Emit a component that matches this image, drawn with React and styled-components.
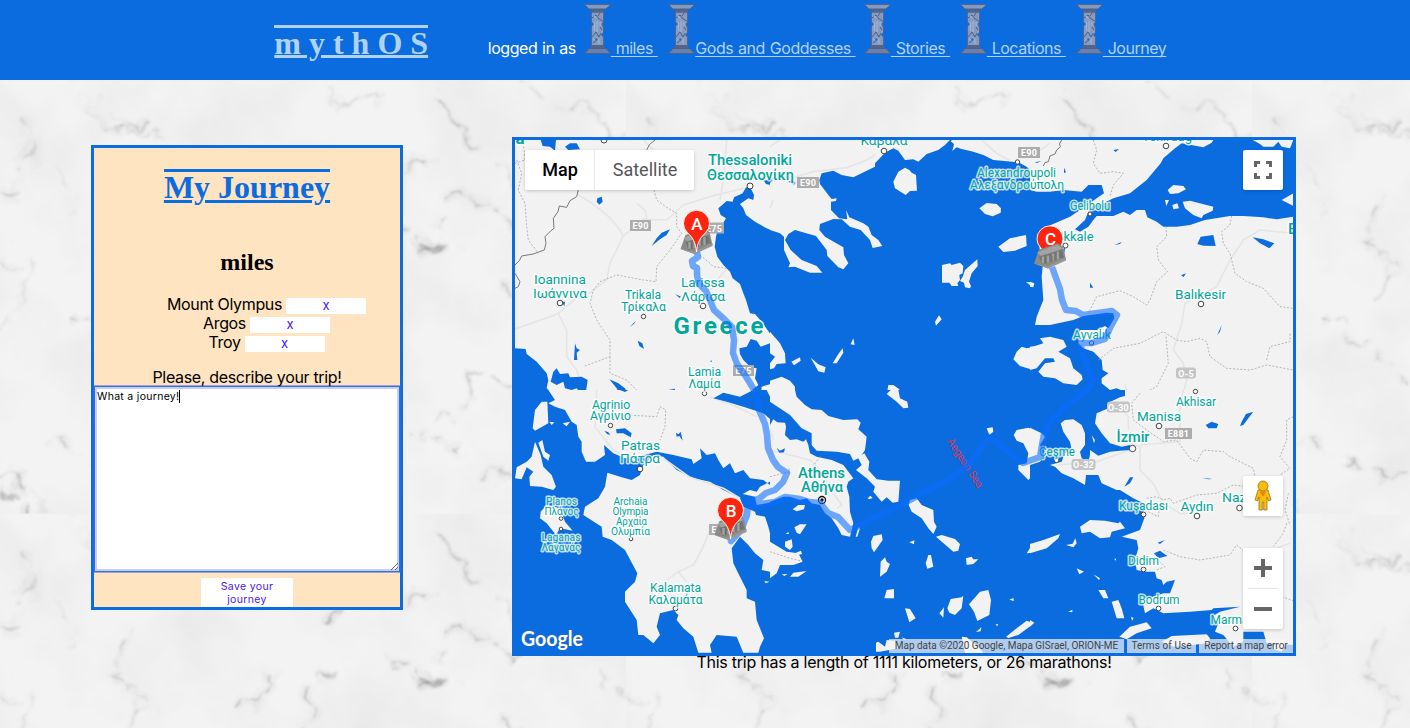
import React from "react";
import styled, { createGlobalStyle } from "styled-components";

const SEA = "#0a6cdf";
const LAND = "#f2f2f2";
const TEAL = "#00a79a";

const GlobalStyle = createGlobalStyle`
  * { box-sizing: border-box; }
  body {
    margin: 0;
    background: #f1f1f1;
    font-family: Inter, "Liberation Sans", sans-serif;
    font-size: 16px;
    color: #000;
  }
`;

const Page = styled.div`
  position: relative;
  width: 1410px;
  height: 728px;
  overflow: hidden;
`;

const Backdrop = styled.svg`
  position: absolute;
  inset: 0;
  z-index: -1;
`;

const Header = styled.header`
  display: flex;
  align-items: baseline;
  height: 80px;
  padding-left: 274.3px;
  background: ${SEA};
`;

const Brand = styled.h1`
  width: 154px;
  margin: 0 59.5px 0 0;
  background: linear-gradient(#b0d2f7, #b0d2f7) 0 0 / 100% 3px no-repeat;
  font: bold 32px "Liberation Serif", serif;
  white-space: nowrap;
  color: #b0d2f7;
  text-decoration: underline;
  text-decoration-thickness: 3px;
  text-underline-offset: 1px;
`;

const Nav = styled.nav`
  display: flex;
  align-items: baseline;
  padding-top: 4px;
  white-space: pre;
  letter-spacing: -0.46px;
  word-spacing: 0.8px;
`;

const LoggedIn = styled.span`
  width: 96px;
  color: #fff;
`;

const NavLink = styled.a`
  display: flex;
  align-items: baseline;
  width: ${(p) => p.$w}px;
  color: #b0d2f7;
  svg { display: block; flex: none; }
  span {
    text-decoration: underline;
    text-decoration-thickness: 1px;
    text-underline-offset: 2px;
    text-decoration-skip-ink: none;
  }
`;

const Main = styled.main`
  display: flex;
  align-items: flex-start;
  padding: 57px 0 0 91px;
`;

const Panel = styled.section`
  display: flex;
  flex-direction: column;
  align-items: center;
  width: 312px;
  height: 465px;
  margin: 8px 109px 0 0;
  border: 3px solid ${SEA};
  background: #ffe4c1;
`;

const Title = styled.h2`
  margin: 21px 0 0;
  background: linear-gradient(${SEA}, ${SEA}) 0 0 / 100% 3px no-repeat;
  font: bold 32px/37px "Liberation Serif", serif;
  color: ${SEA};
  text-decoration: underline;
  text-decoration-thickness: 3px;
  text-underline-offset: 2px;
`;

const Traveller = styled.h3`
  margin: 43px 0 0;
  font: bold 24px/27px "Liberation Serif", serif;
`;

const Stops = styled.ul`
  width: 100%;
  margin: 18px 0 0;
  padding: 0 1px 0 40px;
  list-style: none;
`;

const Stop = styled.li`
  display: flex;
  justify-content: center;
  align-items: center;
  gap: 4px;
  height: 19px;
  letter-spacing: -0.34px;
`;

const Remove = styled.button`
  flex: none;
  width: 80px;
  height: 16px;
  margin-top: 5px;
  padding: 0 0 2px;
  border: 0;
  background: #fff;
  color: #4a17e8;
  font: 13px/14px Inter, sans-serif;
`;

const Prompt = styled.label`
  position: relative;
  z-index: 2;
  margin-top: 17px;
  height: 18px;
  line-height: 18px;
  letter-spacing: -0.33px;
`;

const Notes = styled.div`
  position: relative;
  z-index: 1;
  display: flex;
  align-items: flex-start;
  width: 306px;
  height: 187px;
  padding: 3px 2px;
  border: 1px solid #3f68e0;
  box-shadow: 0 0 0 1px rgba(63, 104, 224, 0.5), inset 0 0 0 2px #c3d0f7;
  background: #fff;
  font: 10.5px/13px Inter, sans-serif;
  letter-spacing: 0.3px;
`;

const Caret = styled.i`
  width: 1px;
  height: 13px;
  background: #000;
`;

const Grip = styled.svg`
  position: absolute;
  right: 1px;
  bottom: 1px;
`;

const Save = styled.button`
  width: 92px;
  height: 29px;
  margin-top: 6px;
  padding: 0 16px;
  border: 0;
  background: #fff;
  color: #4a17e8;
  font: 10.5px/13px Inter, sans-serif;
  letter-spacing: 0.35px;
`;

const MapColumn = styled.section`
  width: 784px;
`;

const MapFrame = styled.div`
  position: relative;
  height: 519px;
  border: 3px solid ${SEA};
  overflow: hidden;
  font-family: Roboto, sans-serif;
`;

const MapArt = styled.svg`
  display: block;
`;

const Control = styled.div`
  position: absolute;
  top: ${(p) => p.$top}px;
  right: 10px;
  display: flex;
  flex-direction: column;
  align-items: center;
  justify-content: center;
  width: 40px;
  height: ${(p) => p.$h || 40}px;
  border-radius: 2px;
  background: #fff;
  box-shadow: 0 1px 4px -1px rgba(0, 0, 0, 0.3);
`;

const TypeSwitch = styled.div`
  position: absolute;
  top: 10px;
  left: 10px;
  display: flex;
  height: 40px;
  border-radius: 2px;
  background: #fff;
  box-shadow: 0 1px 4px -1px rgba(0, 0, 0, 0.3);
`;

const TypeButton = styled.button`
  width: ${(p) => p.$w}px;
  padding: 0 0 1px 1px;
  border: 0;
  border-left: ${(p) => (p.$active ? "0" : "1px solid #e8e8e8")};
  background: transparent;
  color: ${(p) => (p.$active ? "#000" : "#565656")};
  font: ${(p) => (p.$active ? 500 : 400)} 18px Roboto, sans-serif;
`;

const Credits = styled.div`
  position: absolute;
  right: 0;
  bottom: 0;
  display: flex;
  gap: 3px;
`;

const Credit = styled.span`
  width: ${(p) => p.$w}px;
  height: 14px;
  background: rgba(245, 245, 245, 0.7);
  color: #444;
  font-size: 10px;
  line-height: 14px;
  text-align: center;
  white-space: nowrap;
  letter-spacing: ${(p) => p.$ls || 0}px;
`;

const Summary = styled.p`
  margin: 0;
  line-height: 13px;
  text-align: center;
  letter-spacing: -0.25px;
`;

const VEINS = [
  ["M70 0Q90 10 100 30T130 55", 1, 0.2], ["M25 40L30 60 26 85 20 92M0 115L30 108", 3, 0.3],
  ["M0 395Q15 400 25 412L38 434", 4, 0.5], ["M0 412L14 425", 8, 0.4], ["M0 250L25 220 30 180 15 160", 1, 0.2],
  ["M403 95L420 82 438 78 M403 165L420 168 445 160 462 172", 2, 0.45], ["M407 351L430 353 445 365 462 366", 2, 0.5],
  ["M433 12L445 30 470 60 500 90 520 102 560 112", 1.4, 0.42], ["M520 310L490 300 466 285 465 325 430 360", 1.5, 0.45],
  ["M327 107L345 88 370 82 390 95M393 161L398 145 425 170 450 160", 2, 0.45],
  ["M305 214L315 190 308 175 330 160M240 194L255 180 272 170 273 152", 2.2, 0.42],
  ["M440 115L470 120 520 145M435 150L440 135", 2, 0.35], ["M330 15L350 25 380 20", 1.3, 0.3],
  ["M80 10L120 40 165 60 M55 90L75 130", 1, 0.22], ["M520 0L545 20 590 30 626 60", 1.3, 0.35],
  ["M560 250L590 280 626 300M500 200L540 230 560 250", 1.3, 0.35], ["M70 230L95 260 140 280 158 310", 1.3, 0.35],
  ["M50 360L90 375 120 395 160 390", 1.5, 0.4], ["M130 120L110 160 150 190 120 220", 1.4, 0.35],
  ["M180 330L230 350 300 330 350 390", 1.3, 0.3], ["M90 30L110 50 150 40M480 400L530 390 570 420", 1.4, 0.35],
  ["M590 130L600 170 626 180M0 180L20 190", 1.3, 0.3], ["M200 240L260 260 300 300", 1, 0.22],
];

const Marble = () => (
  <Backdrop width="1410" height="728">
    <defs>
      <filter id="vein" x="0" y="0" width="626" height="434" filterUnits="userSpaceOnUse">
        <feTurbulence type="fractalNoise" baseFrequency="0.04" numOctaves="3" seed="7" result="n" />
        <feDisplacementMap in="SourceGraphic" in2="n" scale="30" xChannelSelector="R" yChannelSelector="G" result="bent" />
        <feTurbulence type="fractalNoise" baseFrequency="0.05" numOctaves="4" seed="31" />
        <feColorMatrix values="0 0 0 0 0  0 0 0 0 0  0 0 0 0 0  3.5 0 0 0 -1.25" result="patches" />
        <feComposite in="bent" in2="patches" operator="in" />
        <feGaussianBlur stdDeviation="0.8" />
      </filter>
      <filter id="cloud" x="0" y="0" width="626" height="434" filterUnits="userSpaceOnUse">
        <feTurbulence type="fractalNoise" baseFrequency="0.012" numOctaves="5" seed="12" />
        <feColorMatrix values="0 0 0 0 .62  0 0 0 0 .62  0 0 0 0 .62  .5 0 0 0 -.2" />
      </filter>
      <pattern id="tile" width="626" height="434" y="80" patternUnits="userSpaceOnUse">
        <rect width="626" height="434" fill="#f3f3f3" />
        <rect width="626" height="434" filter="url(#cloud)" />
        <g filter="url(#vein)" fill="none" stroke="#777">
          {VEINS.map(([d, w, o]) => (
            <g key={d}>
              <path d={d} strokeWidth={w * 6} opacity={o * 0.2} />
              <path d={d} strokeWidth={w} opacity={o} />
            </g>
          ))}
        </g>
      </pattern>
    </defs>
    <rect y="80" width="1410" height="648" fill="url(#tile)" />
  </Backdrop>
);

const Column = () => (
  <svg width="27" height="50" viewBox="0 0 27 50">
    <path d="M7.5 8H19.5V18L18 20 19.5 24V29L17.5 31 19.5 33V42H7.5V22L9.5 20 7.5 18Z" fill="#869bc2" stroke="#566789" />
    <path d="M.5.5H26.5L22 5H5Z" fill="#8299c0" stroke="#50648c" />
    <path d="M7 5.2H20V8.5H7ZM7 41H20V44.5H7Z" fill="#53648a" />
    <path d="M5 44.5H22L26.5 49.5H.5Z" fill="#6980ac" stroke="#4c6190" />
    <path d="M8 14L12 11 15 15 19 17M16 9L14 12M8 33L12 28 15 33 17 29M9 39L13 36M16 23L18 26" fill="none" stroke="#4a5976" strokeWidth=".9" />
    <path d="M10.5 18V27M13 17V28M16 18V22M10 12L12 14M15 35V40M10 35V36" stroke="#a3b4d2" strokeWidth="1.2" />
    <path d="M6.5 18.5L9.5 20.5 6.5 22.5ZM20.5 27L17.5 31 20.5 32ZM12 34L14 36H11Z" fill={SEA} />
  </svg>
);

/* Each sheet is a 270px wide piece of the chart drawn at three times its size. */
const SHEETS = [
  {
    x: 510, y: 130, h: 810, base: LAND,
    roads: "M15 597C60 580 100 570 145 550 180 520 210 490 240 488L290 450 300 400 340 318C310 260 250 220 205 195M340 318L400 268 470 270 520 225 600 200 700 175M145 550L170 600 170 680 200 720 230 810M380 220L405 240 410 265M600 530L670 600 670 690 740 790M780 130L810 105M650 30L640 150 630 210M650 415L600 480M400 30L430 60",
    sea: "M810 312L770 295 735 275 708 255 700 235 690 222 715 205 730 210 732 195 722 175 708 172 698 190 672 202 668 215 650 213 625 235 632 255 648 265 640 278 625 290 618 320 614 350 622 380 640 405 660 425 668 445 690 462 700 490 708 510 720 550 735 552 755 575 790 625 810 642ZM762 152L780 148 792 158 782 165 768 162ZM688 655L710 650 722 627 740 632 752 650 780 640 795 660 798 690 780 710 810 708V765L790 760 755 770 752 800 758 810H610L620 790 650 788 680 798 720 785 745 765 735 745 740 715 722 712 700 690 690 672ZM15 655L47 657 50 672 80 695 110 730 115 750 110 775 125 790 128 810H15ZM140 715L130 725 122 755 140 765 160 755 165 775 185 780 200 775 215 795 228 785 233 750 215 740 180 742 175 730 150 732ZM92 30H138L135 62 120 50 98 48ZM165 50L180 40 200 40 210 58 175 60ZM262 205L275 200 278 215 268 224 260 215ZM425 348L440 325 455 308 480 298 470 315 450 328ZM383 632L397 640 402 657 388 648ZM192 690L195 640 200 655 210 660 200 668 202 690ZM298 748L325 760 345 775 355 795 330 795 320 775ZM155 515h10l-2 14ZM360 590L378 572 372 582ZM475 778l20-2v4ZM495 492l18 8-4 4ZM600 694l5-3v5Z",
    lines: "M205 180L200 200 180 212 170 232 148 228 144 245 130 265 132 295 122 303 105 320 108 340 103 360 70 372 35 378 28 392 15 405M15 430L30 455 25 470 15 475M410 60L418 44 435 30",
    dashes: "M20 90L35 130 25 180 45 220 50 290 55 330 85 370M15 100L45 90 40 40M432 180L440 210 470 232 500 250 500 290 515 310 480 360 460 385 440 410 438 455 400 450 320 435 270 455 250 480 240 520 260 570 300 630 300 680 220 710M570 375L600 400 610 410 650 415M300 680L300 730 350 750 390 790",
  },
  {
    x: 770, y: 130, h: 810, base: SEA,
    land: "M0 30H540L525 45 505 60 470 72 445 95 430 88 405 90 385 62 370 55 345 68 315 100 315 110 290 122 250 142 215 135 190 122 155 130 148 150 150 162 175 195 185 207 200 205 198 213 183 215 183 240 207 265 232 268 228 240 238 262 280 280 295 290 305 315 325 330 337 348 308 354 300 330 272 300 240 290 215 268 190 267 150 282 148 300 165 320 220 352 222 375 235 400 220 418 205 412 172 378 170 360 138 318 75 300 55 312 45 330 62 360 95 390 140 408 157 428 120 428 75 410 55 412 60 400 42 360 42 320 30 310 0 300ZM545 30L540 40 548 62 560 52 572 56 610 65 640 75 670 90 745 97 770 110 785 125 800 180 810 185V30ZM370 155L385 125 405 113 418 120 425 128 438 135 441 182 420 183 407 195 375 175ZM628 235L650 219 680 222 693 235 692 248 668 259 645 252ZM685 350L720 325 768 315 770 348 735 362 700 366ZM516 405L540 400 545 405 570 398 580 408 578 430 568 435 570 450 562 460 565 468 545 468 538 458 516 458ZM578 440L585 420 622 388 623 408 605 430 597 455 603 468 600 475 585 472 582 458 570 453ZM768 457L795 455 792 473ZM495 575L507 556 515 568 498 587ZM250 625l-8 18 12 2ZM188 700L205 672 218 655 220 668 200 700ZM64 695L90 682 92 692 72 706ZM122 683L145 703 167 712 163 728 145 724ZM810 647L770 655 755 650 740 665 730 688 750 708 790 720 810 715ZM810 545L795 580 810 592ZM0 605L30 640 45 670 47 700 20 702 12 715 0 718V700L15 680 0 670ZM0 752L35 740 60 752 75 770V810H0ZM355 765L370 765 388 778 385 795 402 810 370 810 350 795Z",
    sea: "M55 155l10-5 12 8-5 6ZM540 32L552 42 548 60 536 45ZM0 158l8-8-8-3Z",
    roads: "M0 155L80 140 130 125 235 112 290 90 315 75M0 50L30 30M635 30L680 70 720 92M0 235L10 210",
  },
  {
    x: 1030, y: 130, h: 810, base: LAND,
    roads: "M790 310L750 306 690 300 640 330 600 390 560 470 465 520 455 580 430 660 460 700 470 750 455 810M0 80L60 40M285 760L295 810",
    sea: "M0 180L20 185 60 185 100 180 155 185 175 165 215 165 222 190 200 205 150 240 120 260 50 290 22 315 28 350 38 410 35 440 40 510 20 560 15 585 60 585 130 570 160 558 230 548 250 550 253 565 235 595 225 588 200 600 150 600 145 640 160 655 190 665 215 690 218 720 235 730 215 745 215 760 240 780 260 775 285 785 280 810H0ZM135 298L165 270 175 245 190 225 220 220 250 205 300 190 350 150 375 120 392 100 400 85 435 55 455 40 500 48 520 52 545 38 550 30H790V260L740 268 700 262 640 258 600 258 525 270 480 285 440 290 400 290 380 275 352 262 345 240 320 240 300 255 280 245 250 258 200 258 190 270 175 290 150 305ZM95 365L106 350 102 375 85 395ZM502 342L512 320 550 315 557 348 520 347ZM668 322L700 328 733 340 718 355 690 340ZM453 436l15-6-7 11ZM180 458l10 15h-10ZM253 345l22-9-5 6ZM250 60l17-3-10 9ZM102 113l6 14-6 2ZM562 615L575 585 570 605ZM15 97l20-4-15 6Z",
    land: "M413 180L430 165 460 168 468 178 445 190 420 192ZM405 210h12l-8 18ZM427 225l15-5 5 15-17 3ZM458 215L480 212 550 230 548 242 520 255 515 265 490 255 465 235ZM668 30H790L780 55 755 50 745 35 730 50 700 50 690 42ZM755 210L790 190V228ZM0 650L15 648 40 640 30 625 60 620 100 630 110 650 85 665 120 685 130 715 155 735 158 748 140 765 100 760 75 745 40 740 25 725 45 700 75 695 70 685 45 685 20 715 0 720ZM0 455L13 460 10 472 0 470Z",
    lines: "M95 30L88 42 92 50 80 60 75 72 60 78 55 95 45 98 40 108",
    dashes: "M190 30L200 60 190 100 210 130 250 125 280 130 250 165 240 200M605 258L600 285 575 305 580 340 600 370 615 430 650 455 700 475 750 530 790 535M408 290L410 320 380 350 385 390 412 425 380 455 360 510 350 525 310 500 270 482 200 500 175 550M205 690L250 655 330 640 400 605 440 630 470 635 510 625 530 635 540 680 590 715 660 720 710 705 790 720M408 620L415 700 380 770 310 805M710 690L720 650 780 635V610",
  },
  {
    x: 510, y: 390, h: 789, base: SEA,
    land: "M115 0L135 30 115 40 135 50 165 60 185 95 200 105 205 140 215 155 215 185 228 215 255 215 285 195 282 165 310 190 345 205 385 200 440 185 490 195 545 208 550 222 575 205 570 175 590 195 615 190 625 210 640 235 660 220 675 250 700 240 720 265 760 270 780 285 810 265V0ZM292 248L335 262 365 270 390 255 400 225 430 195 460 200 500 240 550 265 600 275 640 300 690 325 700 350 735 365 738 375 765 380 775 410 780 430 810 455V565L785 560 780 545 755 540 760 510 735 490 715 465 690 440 665 475 670 520 690 560 710 600 710 625 735 635 740 690 762 745 750 770 745 788H700L680 740 620 735 600 765 605 788H565L550 740 520 715 500 690 505 675 490 660 450 670 440 710 450 735 430 760 400 735 385 735 380 690 345 635 345 605 375 575 382 550 345 480 305 450 278 440 275 410 220 375 225 350 265 325 285 290ZM698 312L720 300 740 305 750 290 790 270 810 262V330L770 340 740 345 735 320ZM75 60L95 35 112 35 115 100 75 122 68 115ZM118 95l15 2-8 8ZM158 100l22-5-10 14ZM75 155L92 195 100 230 125 255 138 290 130 300 95 290 60 288 58 260 70 245 50 232 35 268 15 265 20 232 50 215 65 200ZM85 158L97 150 105 185 120 195 115 212 100 200ZM92 365L110 345 150 355 165 395 188 422 150 415 138 435 110 400 90 385ZM763 573l16 2-12 5Z",
    sea: "M610 25L640 8 690 20 730 0H770L780 20 810 30V95H790L760 70 700 50 650 35ZM283 122l12 5 6 8-10-3ZM318 118L345 115 365 130 362 142 340 130 320 130ZM498 128L505 133 512 125 518 152 508 138 500 140ZM330 0H355L345 6Z",
    roads: "M600 420L575 480 550 525 505 545 470 570M505 545L530 575M260 0L255 110 310 180 385 215M460 205L540 262 640 295 690 325M600 20L680 50 740 80",
    dashes: "M350 75L440 80 450 50 467 60 465 110 450 150M780 470L790 490 810 500",
  },
  {
    x: 770, y: 390, h: 789, base: SEA,
    land: "M0 35L60 75 95 115 125 130 125 165 140 182 200 185 240 192 250 212 265 205 275 225 258 240 290 265 315 290 310 305 335 335 350 322 368 338 385 335 390 272 355 272 320 268 295 240 298 215 283 190 275 195 285 180 290 140 265 118 272 98 262 88 220 90 175 78 155 60 125 58 105 45 80 20 75 0H0ZM0 105L10 88 22 97 45 98 48 110 45 135 60 150 80 148 100 155 108 148 115 165 120 190 140 200 185 210 220 225 250 265 235 275 230 290 238 320 240 365 250 400 240 440 215 435 205 415 185 385 165 370 150 345 125 340 110 325 90 330 60 320 40 320 0 335ZM68 358L85 345 105 345 102 358 80 364ZM73 412L90 403 110 403 90 433 80 428ZM47 432l8-6 2 6ZM45 455L65 448 68 470 60 480 45 470ZM78 488l15-6 3 10-12 3ZM0 455L25 470 50 485 85 490 98 515 70 525 30 525 20 550 0 565ZM35 553l18-1-10 6ZM60 560L70 548 110 543 85 560ZM257 440L265 412 270 415 262 440ZM303 455L310 438 335 433 338 450 312 487 305 475ZM418 457l15-6-1 12ZM467 520L475 495 483 495 490 530 472 536ZM330 560L332 515 345 502 350 515 360 522 350 545ZM343 625L350 600 372 597 372 625ZM405 655L420 657 437 685 418 697ZM420 330L440 325 455 345 490 360 492 395 500 410 490 432 475 415 455 385 425 365 416 345ZM498 440L515 435 555 447 570 462 565 482 550 485ZM588 505L605 500 610 508 625 508 610 522 590 525ZM597 643L630 605 655 600 663 630 658 675 622 693 612 665ZM532 655L542 627 575 622 580 617 575 655 555 675 538 668ZM508 670L522 652 520 683ZM718 628l13-3v9ZM676 703h9l-3 6ZM618 726L634 712 632 724ZM708 740L740 715 770 692 793 700 745 735 715 744ZM575 740L590 742 630 775 640 789 585 789ZM318 758L325 755 345 770 350 750 375 752 385 775 330 785 318 785ZM372 728l18-3-5 18h-10ZM293 325l8-8 7 7-10 4ZM395 742l15 6-8 2ZM650 115L668 112 670 125 658 135ZM731 135L740 120 775 113 810 130V235L775 270 745 240 745 225 770 220 775 190 760 160 740 152ZM770 490L790 458 810 450V487ZM350 12L362 0H385L390 25 412 35 415 53 400 55 380 35Z",
    sea: "M20 173L30 182 45 175 42 187 28 188Z",
    roads: "M0 180L60 195 120 210 150 240 190 310 215 345 200 355M0 120L10 150",
    dashes: "M0 260L60 245 55 230M120 240L150 200M0 485L60 505 90 512",
  },
  {
    x: 1030, y: 390, h: 789, base: LAND,
    roads: "M300 160L330 170 330 240 370 280 400 340 450 370 490 370M330 165L450 155 450 40 460 0M270 50L295 80V120M80 225L200 215 300 180M780 460L740 475",
    sea: "M0 0H285V18L270 22 235 38 235 55 200 70 195 100 215 130 240 160 275 170 300 165 302 180 270 182 240 185 205 197 180 180 180 195 175 215 155 205 150 185 165 165 165 130 155 105 130 88 105 90 92 100 100 125 120 155 125 180 105 190 95 215 60 225 75 230 95 250 130 265 165 285 168 255 205 255 215 280 260 300 270 300 310 325 340 340 343 385 330 420 275 440 320 450 325 475 315 510 320 540 345 545 375 545 380 565 395 570 400 585 410 575 435 570 420 610 400 610 360 625 335 625 345 670 370 655 400 670 480 665 545 660 550 655 630 650 570 665 545 680 565 700 555 725 580 735 610 770 640 755 640 725 700 725 710 760 790 765V789H0ZM527 105L545 95 565 102 560 115 535 115ZM630 108L635 95 648 72 670 65 655 85 640 105ZM283 290L300 262 310 262 300 280ZM515 263l32 4-12 1ZM372 490L390 482 412 498 385 505ZM383 458l22-8-15 12Z",
    land: "M0 113L35 130 45 140 30 165 40 200 30 215 0 225ZM150 410L180 390 225 392 265 400 270 395 285 415 245 425 240 442 210 445 180 425 155 430ZM0 462L40 450 90 432 85 445 50 475 0 490ZM108 465l20-4 8-16 4 15-10 12ZM140 535L162 545 148 553ZM190 553l20 12-3 5ZM205 600L225 600 235 625 220 625ZM245 635L265 630 275 655 283 685 260 685ZM303 680l8 4-5 8ZM115 665l12-6v8ZM268 740L300 710 350 697 365 715 320 730 290 748ZM0 690l13 8-13 12ZM252 506h6v6ZM185 135l10 15-3 10ZM395 755L425 738 530 733 540 745 535 760 430 770ZM725 775L750 745 775 750 755 785Z",
    dashes: "M330 10L305 40 310 90 350 120 400 155 440 150 480 205 500 215 520 180 580 185 600 200 670 235 675 260M790 80L770 90 770 150 750 200 780 235 750 255M350 325L380 320 400 330 420 325 430 340 500 315 560 310 610 285 650 290M345 360L385 380 390 340M400 480L450 500 510 510 600 495 620 465 650 490M770 400L760 430 730 470M775 310L765 360 780 405M380 505L405 530 380 540M755 620L790 632",
  },
];

const ROUTE = "M697 252L698 257 692 261 693 266 697 268 697 275 699 284 706 291 710 300 714 310 724 319 732 327 734 340 733 353 737 364 745 375 753 388 757 397 759 410 765 424 767 435 768 448 773 460 778 467 787 473 783 482 775 490 766 493 760 498 748 503 747 515 741 530 731 541 741 530 748 508 760 504 775 502 785 497 800 499 809 502 820 503 828 513 838 517 850 530 897 507 953 477 973 460 989 437 1023 463 1040 457 1042 445 1044 434 1050 422 1065 407 1087 390 1093 381 1089 370 1085 362 1080 343 1092 343 1105 339 1111 326 1117 315 1112 311 1098 313 1083 315 1076 311 1066 310 1062 300 1060 289 1056 278 1052 267";

/* [text, centre, baseline, size, width, weight] */
const LABELS = [
  ["Thessaloniki", 750, 165, 14, 84, 500], ["Θεσσαλονίκη", 750.5, 179.5, 14, 87, 500],
  ["Καβάλα", 884, 145, 13, 47], ["Alexandroupoli", 1016.5, 176.5, 12, 79], ["Αλεξανδρούπολη", 1017, 188.5, 12, 94],
  ["Tekirdağ", 1167, 141, 12, 50], ["Gelibolu", 1090, 210, 12, 40], ["kkale", 1078.5, 240.5, 12, 30],
  ["Ioannina", 560, 284, 13, 52], ["Ιωάννινα", 560, 297.5, 13, 54], ["Larissa", 703, 287, 13, 44], ["Λάρισα", 703, 300.5, 13, 44],
  ["Trikala", 643, 299, 12, 36], ["Τρίκαλα", 643.5, 311, 12, 45], ["Lamia", 704.5, 376, 12, 33], ["Λαμία", 704.5, 388, 12, 32],
  ["Agrinio", 611, 408.5, 12, 38], ["Αγρίνιο", 610.5, 420, 12, 41], ["Patras", 640.5, 449.5, 13, 39], ["Πάτρα", 640, 463, 13, 40],
  ["Athens", 821.5, 478, 14, 47, 500], ["Αθήνα", 822, 492, 14, 42, 500], ["Planos", 561.5, 504.5, 10.5, 31], ["Πλάνος", 561.5, 514.5, 10.5, 34],
  ["Laganas", 561, 540.5, 10.5, 39], ["Λαγανάς", 561, 551, 10.5, 39], ["Archaia", 630.5, 504.5, 10.5, 34], ["Olympia", 630.5, 514.5, 10.5, 36],
  ["Αρχαία", 631.5, 524.5, 10.5, 31], ["Ολυμπία", 630.5, 534.5, 10.5, 39], ["Kalamata", 675.5, 591.5, 12.5, 51], ["Καλαμάτα", 675.5, 603.5, 12.5, 54],
  ["Balıkesir", 1200.5, 298.5, 13, 51], ["Ayvalık", 1092, 338.5, 12, 38], ["Akhisar", 1196, 405.5, 12, 40], ["Manisa", 1159, 421, 13, 44],
  ["İzmir", 1133, 442, 15, 33, 500], ["Çeşme", 1057, 455.5, 12, 36], ["Kuşadası", 1143.5, 509.5, 12, 49], ["Aydın", 1197, 511, 13, 33],
  ["Nazilli", 1241, 502, 13, 38], ["Didim", 1143.5, 565, 12, 31], ["Bodrum", 1159, 603.5, 12, 41], ["Marmaris", 1236, 623.5, 12, 51],
  ["B", 1293, 234, 14, 10, 500], ["D", 1297, 517, 13, 10, 500],
];

const TOWNS = [
  [604, 140, 3], [750, 186, 3], [884, 151, 2.8], [1017.5, 162, 2.2], [1166, 146, 2.8], [1090, 214, 2], [1065.5, 245.5, 2.5], [560, 303, 2.8],
  [703, 306, 2.8], [643.5, 316.5, 2.2], [704.5, 393.5, 2.2], [610.5, 425.5, 2.2], [640, 469, 2.8], [561, 518.5, 1.8], [561, 529, 1.8],
  [631, 539, 1.8], [675.5, 608.5, 2.4], [1201, 304, 2.8], [1091.5, 343, 2.2], [1195.5, 391.5, 2.2], [1159, 426, 2.8], [1132.5, 448.5, 3.2],
  [1056.5, 460.5, 2.2], [1143.5, 514.5, 2.4], [1197, 516, 2.8], [1239.5, 508, 2.8], [1143.5, 569.5, 2.4], [1158.5, 608.5, 2.4], [1235.5, 628.5, 2.4],
];

const SHIELDS = [
  [630, 220, 21, "E90"], [704, 222.5, 20, "E75"], [797, 177, 22, "E90"], [1018, 147, 22, "E90"], [733, 365, 21, "E75"],
  [709, 524, 21, "E65"], [1165, 428, 27, "E881"], [1176, 367.5, 20, "O-5", 1], [1107, 401.5, 23, "O-30", 1], [1071.5, 459, 24, "O-32", 1],
];

const Temple = ({ x, y }) => (
  <g transform={`translate(${x} ${y})`}>
    <path d="M0 20L5 6 24 0 29 3 32 16 14 25Z" fill="#8a8a88" />
    <path d="M3 9L23 1 29 5 8 13Z" fill="#a3a3a1" />
    <path d="M5 13L28 6 30 14 8 21Z" fill="#737673" />
    <path d="M9 13V20M14 12V19M19 10V17M24 8V16" stroke="#a1a19f" strokeWidth="2.4" />
    <path d="M0 20L14 23 32 14V17L14 25Z" fill="#989896" />
    <path d="M18 12V17M11 14V20M26 8V14" stroke="#5b7168" strokeWidth=".8" />
  </g>
);

const Pin = ({ x, y, label }) => (
  <g transform={`translate(${x} ${y})`}>
    <path d="M0 28.5C-1 18-4 14-9 9.2A13 13 0 1 1 9 9.2C4 14 1 18 0 28.5Z" fill="#fb2510" stroke="#fff" strokeWidth=".9" />
    <text x=".5" y="6.2" textAnchor="middle" fontSize="17" fontWeight="500" fill="#fff">{label}</text>
  </g>
);

const Chart = () => (
  <MapArt width="778" height="513" viewBox="515 140 778 513">
    <rect x="515" y="140" width="778" height="513" fill={SEA} />
    {SHEETS.map((s) => (
      <g key={`${s.x}-${s.y}`} transform={`translate(${s.x} ${s.y}) scale(.33333)`} fill="none">
        <rect width="810" height={s.h} fill={s.base} />
        {s.base === SEA && <path d={s.land} fill={LAND} />}
        <path d={s.roads} stroke="#e5e5e5" strokeWidth="5" strokeLinejoin="round" />
        {s.sea && <path d={s.sea} fill={SEA} />}
        {s.base === LAND && s.land && <path d={s.land} fill={LAND} />}
        {s.lines && <path d={s.lines} stroke="#777" strokeWidth="3" strokeLinejoin="round" />}
        {s.dashes && <path d={s.dashes} stroke="#aaa" strokeWidth="2.6" strokeDasharray="6 5" />}
      </g>
    ))}
    {SHIELDS.map(([x, y, w, t, round]) => (
      <g key={`${x}${t}`}>
        <rect x={x} y={y} width={w} height="11" rx={round ? 3 : 0.5} fill={round ? "#c5c5c5" : "#acacac"} />
        <text x={x + w / 2} y={y + 9} textAnchor="middle" fontSize="9" fontWeight="700" letterSpacing=".2" fill="#fff">{t}</text>
      </g>
    ))}
    {TOWNS.map(([x, y, r]) => (
      <circle key={`${x}-${y}`} cx={x} cy={y} r={r} fill="#fff" stroke="#444" />
    ))}
    <circle cx="822" cy="500" r="3.5" fill="#fff" stroke="#111" strokeWidth="1.3" />
    <circle cx="822" cy="500" r="1.7" fill="#111" />
    <g fill={TEAL} stroke="#fff" strokeOpacity=".75" strokeWidth="3" strokeLinejoin="round" paintOrder="stroke" textAnchor="middle">
      <text x="520" y="144" fontSize="17" fontWeight="700">a</text>
      {LABELS.map(([t, x, y, size, w, weight]) => (
        <text key={`${t}${y}`} x={x} y={y} fontSize={size} fontWeight={weight || 400} textLength={w} lengthAdjust="spacingAndGlyphs">{t}</text>
      ))}
      <text x="718.5" y="333.5" fontSize="24" fontWeight="700" textLength="90">Greece</text>
    </g>
    <text transform="translate(946.5 441) rotate(57)" fontSize="11" fill="#d3385c" textLength="57">Aegean Sea</text>
    <path d={ROUTE} fill="none" stroke="#0a6cff" strokeOpacity=".58" strokeWidth="6.5" strokeLinejoin="round" />
    <Temple x="680.5" y="229" />
    <Pin x="696.5" y="223.5" label="A" />
    <Temple x="714.5" y="515" />
    <Pin x="730.5" y="510.5" label="B" />
    <Pin x="1050" y="239" label="C" />
    <Temple x="1034" y="243.5" />
    <text x="521" y="645.5" fontFamily="Lato" fontSize="20.5" fontWeight="700" fill="#fff" stroke="#3c6aa8" strokeOpacity=".6" strokeWidth="1.4" paintOrder="stroke" textLength="62" lengthAdjust="spacingAndGlyphs">Google</text>
  </MapArt>
);

const Pegman = () => (
  <svg width="18" height="32" viewBox="0 0 18 32">
    <path d="M4 10Q9 8 14 10L17 20 14.5 21 13 17V30H9.7V22H8.3V30H5V17L3.5 21 1 20Z" fill="#fbbc05" stroke="#96742c" strokeWidth=".8" />
    <path d="M5.5 11.5H12.5L9 16.5Z" fill="#e8811a" />
    <circle cx="9" cy="6" r="5" fill="#fbbc05" stroke="#96742c" strokeWidth=".8" />
  </svg>
);

const LINKS = [
  [" miles ", 84.5], ["Gods and Goddesses ", 195.5], [" Stories ", 96], [" Locations ", 116], [" Journey", 90],
];

export default function App() {
  return (
    <Page>
      <GlobalStyle />
      <Marble />
      <Header>
        <Brand>m y t h O S</Brand>
        <Nav>
          <LoggedIn>logged in as </LoggedIn>
          {LINKS.map(([text, w]) => (
            <NavLink key={text} $w={w}>
              <Column />
              <span>{text}</span>
            </NavLink>
          ))}
        </Nav>
      </Header>
      <Main>
        <Panel>
          <Title>My Journey</Title>
          <Traveller>miles</Traveller>
          <Stops>
            {["Mount Olympus", "Argos", "Troy"].map((name) => (
              <Stop key={name}>
                {name}
                <Remove>x</Remove>
              </Stop>
            ))}
          </Stops>
          <Prompt>Please, describe your trip!</Prompt>
          <Notes>
            What a journey!
            <Caret />
            <Grip width="8" height="8" stroke="#555" strokeWidth=".9">
              <path d="M1 8L8 1M5 8L8 5" />
            </Grip>
          </Notes>
          <Save>Save your journey</Save>
        </Panel>
        <MapColumn>
          <MapFrame>
            <Chart />
            <TypeSwitch>
              <TypeButton $w={69} $active>Map</TypeButton>
              <TypeButton $w={100}>Satellite</TypeButton>
            </TypeSwitch>
            <Control $top={10}>
              <svg width="18" height="18" fill="none" stroke="#666" strokeWidth="3">
                <path d="M1.5 6V1.5H6M12 1.5H16.5V6M16.5 12V16.5H12M6 16.5H1.5V12" />
              </svg>
            </Control>
            <Control $top={336}><Pegman /></Control>
            <Control $top={408} $h={81}>
              <svg width="30" height="81" stroke="#666" strokeWidth="4">
                <path d="M6 20H24M15 11V29M6 61H24" />
                <path d="M0 40.5H30" stroke="#e6e6e6" strokeWidth="1" />
              </svg>
            </Control>
            <Credits>
              <Credit $w={235} $ls={-0.02}>Map data ©2020 Google, Mapa GISrael, ORION-ME</Credit>
              <Credit $w={69} $ls={0.08}>Terms of Use</Credit>
              <Credit $w={94} $ls={0}>Report a map error</Credit>
            </Credits>
          </MapFrame>
          <Summary>This trip has a length of 1111 kilometers, or 26 marathons!</Summary>
        </MapColumn>
      </Main>
    </Page>
  );
}
